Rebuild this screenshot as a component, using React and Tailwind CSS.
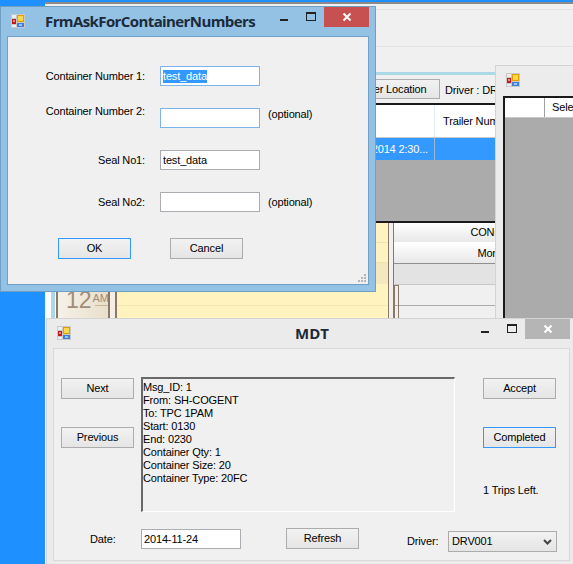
const SANS = 'font-["Liberation_Sans",Arial,sans-serif] text-[11px] tracking-[-0.15px]';

const MESSAGE = [
  'Msg_ID: 1',
  'From: SH-COGENT',
  'To: TPC 1PAM',
  'Start: 0130',
  'End: 0230',
  'Container Qty: 1',
  'Container Size: 20',
  'Container Type: 20FC',
];

function AppIcon() {
  return (
    <svg width="14" height="14" viewBox="0 0 14 14" className="shrink-0">
      <rect x="0" y="0" width="14" height="14" fill="#c9c9c9" />
      <rect x="1" y="1" width="4" height="3" fill="#eeeeee" />
      <rect x="1" y="11" width="4" height="2" fill="#eeeeee" />
      <rect x="1" y="5" width="4" height="5" fill="#c8171b" />
      <rect x="2" y="6" width="2" height="2" fill="#f08a80" />
      <rect x="6" y="1" width="7" height="7" fill="#e0a000" />
      <rect x="7" y="2" width="5" height="5" fill="#ffd84a" />
      <rect x="6" y="9" width="7" height="4" fill="#3f7fd8" />
      <rect x="8" y="10" width="3" height="2" fill="#9cc4f2" />
    </svg>
  );
}

function CaptionButtons({ closeClass, offset }) {
  return (
    <div className={`flex items-start ${offset}`}>
      <div className="mt-[12px] h-[2px] w-[8px] bg-[#222222]" />
      <div className="ml-[18px] mt-[5px] h-[9px] w-[10px] border border-t-2 border-[#222222]" />
      <div className={`ml-[8px] flex h-[20px] w-[45px] items-center justify-center ${closeClass}`}>
        <svg width="10" height="10" viewBox="0 0 10 10">
          <path d="M1.5 1.5 L8.5 8.5 M8.5 1.5 L1.5 8.5" stroke="#ffffff" strokeWidth="2" />
        </svg>
      </div>
    </div>
  );
}

function WinButton({ children, focused }) {
  return (
    <div
      className={`flex h-[21px] w-[73px] items-center justify-center border bg-gradient-to-b from-[#f2f2f2] to-[#e5e5e5] text-black ${
        focused ? 'border-[#3399ff]' : 'border-[#acacac]'
      }`}
    >
      {children}
    </div>
  );
}

function TextBox({ value, focused, selected }) {
  return (
    <div
      className={`flex h-[20px] w-[100px] items-center border bg-white px-[2px] text-black ${
        focused ? 'border-[#7eb4ea]' : 'border-[#abadb3]'
      }`}
    >
      {selected ? <span className="bg-[#3399ff] leading-[13px] text-white">{value}</span> : value}
    </div>
  );
}

function FormRow({ label, value, optional, focused, selected, raised }) {
  return (
    <div className="flex h-[20px] items-center">
      <div className={`w-[137px] text-right text-black ${raised ? '-translate-y-[7px]' : ''}`}>{label}</div>
      <div className="ml-[15px]">
        <TextBox value={value} focused={focused} selected={selected} />
      </div>
      {optional && <span className={`ml-[8px] text-black ${raised ? '-translate-y-[4px]' : ''}`}>(optional)</span>}
    </div>
  );
}

function ContainerDialog() {
  return (
    <div className="absolute left-0 top-[6px] flex h-[286px] w-[376px] flex-col border border-[#6f9fc4] bg-[#93c2e5] pb-[6px] pl-[6px] pr-[6px]">
      <div className="flex h-[29px] shrink-0 items-start">
        <div className="ml-[4px] mt-[7px]">
          <AppIcon />
        </div>
        <div className='ml-[20px] mt-[3px] font-["Open_Sans",sans-serif] text-[15px] font-bold tracking-[-0.6px] text-[#1c2a3a]'>
          FrmAskForContainerNumbers
        </div>
        <div className="flex-1" />
        <CaptionButtons closeClass="bg-[#c75050]" offset="mr-[0px]" />
      </div>
      <div className="relative flex-1 border border-[#6f9fc4] bg-[#f0f0f0] pt-[29px]">
        <div className="flex flex-col gap-[22px]">
          <FormRow label="Container Number 1:" value="test_data" focused selected />
          <FormRow label="Container Number 2:" optional focused raised />
          <FormRow label="Seal No1:" value="test_data" />
          <FormRow label="Seal No2:" optional />
        </div>
        <div className="ml-[50px] mt-[26px] flex gap-[39px]">
          <WinButton focused>OK</WinButton>
          <WinButton>Cancel</WinButton>
        </div>
        <svg width="10" height="10" viewBox="0 0 10 10" className="absolute bottom-[1px] right-[1px]" fill="#b5b5b5">
          <rect x="7" y="1" width="2" height="2" />
          <rect x="4" y="4" width="2" height="2" />
          <rect x="7" y="4" width="2" height="2" />
          <rect x="1" y="7" width="2" height="2" />
          <rect x="4" y="7" width="2" height="2" />
          <rect x="7" y="7" width="2" height="2" />
        </svg>
      </div>
    </div>
  );
}

function ScheduleYellow() {
  return (
    <div className="flex w-[271px] flex-col">
      <div className="h-[20px] border-b border-[#f1e3b0] bg-[#fff3c0]" />
      <div className="h-[20px] border-b border-[#f1e3b0] bg-[#fff3c0]" />
      <div className="h-[21px] bg-[#f4e8bf]" />
      <div className="h-[22px] border-b border-[#f5e8b8] bg-[#fff3c0]" />
      <div className="flex-1 bg-[#fff3c0]" />
    </div>
  );
}

function MainWindow() {
  return (
    <div className={`absolute left-[45px] top-[2px] flex h-[562px] w-[528px] flex-col bg-[#f0f0f0] ${SANS}`}>
      <div className="h-[2px] bg-[#8a8a8a]" />
      <div className="mt-[5px] h-[1px] bg-[#e4e4e4]" />
      <div className="mt-[36px] h-[1px] bg-[#e4e4e4]" />
      <div className="mt-[25px] h-[3px] shrink-0 bg-[#add8e6]" />
      <div className="flex h-[28px] shrink-0 items-start pt-[4px]">
        <div className="ml-[295px] flex h-[20px] w-[100px] items-center justify-center border border-[#acacac] bg-gradient-to-b from-[#f2f2f2] to-[#e5e5e5] text-black">
          Trailer Location
        </div>
        <span className="ml-[5px] mt-[3px] whitespace-nowrap text-black">Driver : DRV001</span>
      </div>
      <div className="flex h-[120px] shrink-0 flex-col border-y-2 border-[#1a1a1a] bg-[#ababab]">
        <div className="flex h-[33px] border-b border-[#c8c8c8] bg-white">
          <div className="w-[390px] border-r border-[#e4ecf6]" />
          <div className="flex items-center whitespace-nowrap pl-[8px] text-black">Trailer Number</div>
        </div>
        <div className="flex h-[22px] bg-[#3399ff] text-white">
          <div className="flex w-[390px] items-center justify-end border-r border-[#9ab8d8] pr-[6px]">11/24/2014 2:30...</div>
        </div>
      </div>
      <div className="flex flex-1 bg-[#f0f0f0]">
        <div className="flex w-[11px] bg-white">
          <div className="ml-[6px] w-[4px] bg-[#add8e6]" />
        </div>
        <div className="h-[95px] w-[54px] border-x-2 border-[#8c7868] bg-gradient-to-r from-[#f6f1e8] to-[#e9dfca] pt-[64px]">
          <div className="flex items-start pl-[8px] text-[#a08c78]">
            <span className="text-[23px] leading-[26px] tracking-normal">12</span>
            <span className="mt-[3px] pl-[1px] text-[11px]">AM</span>
          </div>
          <div className="ml-[37px] mt-[-8px] h-[1px] bg-[#cdb98f]" />
        </div>
        <div className="h-[95px] w-[7px] border-r-2 border-[#8c7868] bg-[#f4efe6]" />
        <ScheduleYellow />
        <div className="w-[6px] border-x border-[#8c7868] bg-[#f0f0f0]" />
        <div className="flex flex-1 flex-col">
          <div className="flex h-[20px] items-center justify-center border-b border-[#ffffff] bg-gradient-to-b from-white to-[#e8e8e8] pl-[44px] text-black">
            CONCOGENT
          </div>
          <div className="flex h-[21px] items-center justify-center border-b border-[#8f8f8f] bg-gradient-to-b from-white to-[#e8e8e8] pl-[26px] text-black">
            Monday
          </div>
          <div className="h-[21px] border-b border-[#c8c8c8] bg-[#e3e3e3]" />
          <div className="flex h-[21px] border-b border-[#ababab]">
            <div className="h-[40px] w-[5px] border-x border-t border-[#8c7868]" />
          </div>
        </div>
      </div>
    </div>
  );
}

function SideWindow() {
  return (
    <div className={`absolute left-[495px] top-[65px] flex h-[499px] w-[78px] flex-col border-l border-t border-[#d4d4d4] bg-[#ececec] ${SANS}`}>
      <div className="flex h-[30px] shrink-0 pl-[10px] pt-[7px]">
        <AppIcon />
      </div>
      <div className="ml-[7px] flex-1 overflow-hidden border-l-2 border-t-2 border-[#1a1a1a] bg-[#ababab]">
        <div className="flex h-[20px] border-b border-[#c8c8c8] bg-white">
          <div className="w-[40px] shrink-0 border-r border-[#a0a0a0]" />
          <div className="flex items-center whitespace-nowrap pl-[7px] text-black">Select</div>
        </div>
      </div>
    </div>
  );
}

function MdtWindow() {
  return (
    <div className={`absolute left-[46px] top-[318px] flex h-[246px] w-[527px] flex-col border-t border-l border-[#d4d4d4] bg-[#ebebeb] ${SANS}`}>
      <div className="relative flex h-[29px] shrink-0 items-start">
        <div className="ml-[10px] mt-[7px]">
          <AppIcon />
        </div>
        <div className='absolute left-[248px] top-[3px] font-["Open_Sans",sans-serif] text-[15px] font-bold tracking-normal text-[#1c2a3a]'>
          MDT
        </div>
        <div className="flex-1" />
        <CaptionButtons closeClass="bg-[#b5b5b5]" offset="mr-[3px]" />
      </div>
      <div className="mb-[3px] ml-[6px] mr-[3px] flex flex-1 flex-col border border-[#d9d9d9] bg-[#f0f0f0] pl-[7px] pt-[28px]">
        <div className="flex items-start">
          <div className="flex flex-col gap-[28px] pt-[1px]">
            <WinButton>Next</WinButton>
            <WinButton>Previous</WinButton>
          </div>
          <div className="ml-[7px] h-[135px] w-[314px] border-2 border-r border-b border-[#696969] border-r-white border-b-white pt-[2px] leading-[13px] text-black">
            {MESSAGE.map((line) => (
              <div key={line}>{line}</div>
            ))}
          </div>
          <div className="ml-[28px] flex flex-col gap-[28px] pt-[1px]">
            <WinButton>Accept</WinButton>
            <WinButton focused>Completed</WinButton>
            <div className="mt-[6px] whitespace-nowrap text-black">1 Trips Left.</div>
          </div>
        </div>
        <div className="mt-[16px] flex items-start">
          <span className="ml-[29px] mt-[3px] w-[24px] text-black">Date:</span>
          <div className="ml-[27px] mt-[1px]">
            <TextBox value="2014-11-24" />
          </div>
          <div className="ml-[45px]">
            <WinButton>Refresh</WinButton>
          </div>
          <span className="ml-[48px] mt-[5px] w-[32px] text-black">Driver:</span>
          <div className="ml-[9px] mt-[3px] flex h-[21px] w-[109px] items-center justify-between border border-[#acacac] bg-gradient-to-b from-[#f2f2f2] to-[#e5e5e5] pl-[3px] pr-[4px] text-black">
            DRV001
            <svg width="9" height="6" viewBox="0 0 9 6">
              <path d="M1 1 L4.5 4.5 L8 1" fill="none" stroke="#444444" strokeWidth="2" />
            </svg>
          </div>
        </div>
      </div>
    </div>
  );
}

export default function App() {
  return (
    <div className={`relative h-[564px] w-[573px] overflow-hidden bg-[#1e90ff] ${SANS}`}>
      <MainWindow />
      <SideWindow />
      <MdtWindow />
      <ContainerDialog />
    </div>
  );
}
